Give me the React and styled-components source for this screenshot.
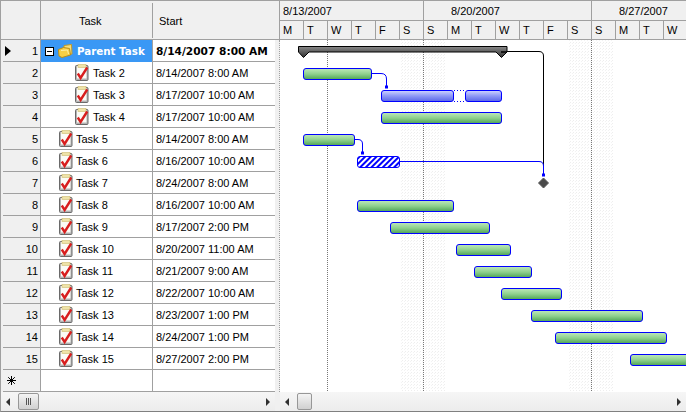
import React from "react";
import styled, { createGlobalStyle } from "styled-components";

const tasks = [
  { id: 1, name: "Parent Task", start: "8/14/2007 8:00 AM", parent: true },
  { id: 2, name: "Task 2", start: "8/14/2007 8:00 AM", child: true },
  { id: 3, name: "Task 3", start: "8/17/2007 10:00 AM", child: true },
  { id: 4, name: "Task 4", start: "8/17/2007 10:00 AM", child: true },
  { id: 5, name: "Task 5", start: "8/14/2007 8:00 AM" },
  { id: 6, name: "Task 6", start: "8/16/2007 10:00 AM" },
  { id: 7, name: "Task 7", start: "8/24/2007 8:00 AM" },
  { id: 8, name: "Task 8", start: "8/16/2007 10:00 AM" },
  { id: 9, name: "Task 9", start: "8/17/2007 2:00 PM" },
  { id: 10, name: "Task 10", start: "8/20/2007 11:00 AM" },
  { id: 11, name: "Task 11", start: "8/21/2007 9:00 AM" },
  { id: 12, name: "Task 12", start: "8/22/2007 10:00 AM" },
  { id: 13, name: "Task 13", start: "8/23/2007 1:00 PM" },
  { id: 14, name: "Task 14", start: "8/24/2007 1:00 PM" },
  { id: 15, name: "Task 15", start: "8/27/2007 2:00 PM" },
];

const weeks = [
  { label: "8/13/2007", width: 144, pad: 3 },
  { label: "8/20/2007", width: 168, pad: 27 },
  { label: "8/27/2007", width: 168, pad: 27 },
];

const days = "MTWTFSSMTWTFSSMTW".split("");

// [left, right, top] in page pixels
const greenBars = [
  [303, 372, 68],
  [381, 502, 112],
  [303, 355, 134],
  [357, 454, 200],
  [390, 490, 222],
  [456, 511, 244],
  [474, 532, 266],
  [501, 562, 288],
  [531, 643, 310],
  [555, 667, 332],
  [630, 700, 354],
];

const GlobalStyle = createGlobalStyle`
  html, body {
    margin: 0;
    padding: 0;
    background: #fff;
  }
`;

const Frame = styled.div`
  width: 686px;
  height: 412px;
  box-sizing: border-box;
  border-top: 1px solid #a0a0a0;
  border-left: 1px solid #a0a0a0;
  border-bottom: 1px solid #808080;
  background: #fff;
  font-family: "Liberation Sans", Arial, sans-serif;
  font-size: 11px;
  color: #000;
  overflow: hidden;
`;

const Panes = styled.div`
  display: flex;
  height: 391px;
`;

const LeftPane = styled.div`
  width: 279px;
  flex: none;
  display: flex;
  flex-direction: column;
  background: #f0f0f0;
`;

const GridHeader = styled.div`
  display: grid;
  grid-template-columns: 40px 112px 1fr;
  height: 39px;
  box-sizing: border-box;
  border-bottom: 1px solid #a0a0a0;
  border-right: 1px solid #a0a0a0;
`;

const HeaderCell = styled.div`
  display: flex;
  align-items: center;
  padding-left: ${(p) => p.$pad}px;
  margin: ${(p) => (p.$first ? "0" : "2px 0 1px")};
  border-right: ${(p) => (p.$line ? "1px solid #a0a0a0" : "none")};
`;

const GridBody = styled.div`
  display: flex;
  flex-direction: column;
  flex: 1;
  border-right: 1px dotted #a0a0a0;
  padding-right: 3px;
`;

const Row = styled.div`
  display: grid;
  grid-template-columns: 40px 112px 122px;
  height: 22px;
`;

const RowHead = styled.div`
  padding-left: 2px;
  border-right: 1px solid #a0a0a0;
`;

const RowHeadInner = styled.div`
  height: 21px;
  border-bottom: 1px solid #a0a0a0;
  display: flex;
  align-items: center;
  justify-content: space-between;
  padding: 0 2px;
`;

const Pointer = styled.span`
  width: 0;
  height: 0;
  border-left: 6px solid #000;
  border-top: 5px solid transparent;
  border-bottom: 5px solid transparent;
`;

const RowNumber = styled.span`
  margin-left: auto;
`;

const TaskCell = styled.div`
  display: flex;
  align-items: center;
  padding-left: ${(p) => (p.$parent ? 4 : p.$child ? 34 : 18)}px;
  box-sizing: border-box;
  background: ${(p) => (p.$selected ? "#3a98f5" : "#fff")};
  color: ${(p) => (p.$selected ? "#fff" : "#000")};
  font-family: ${(p) => (p.$selected ? '"DejaVu Sans", sans-serif' : "inherit")};
  font-weight: ${(p) => (p.$selected ? 700 : 400)};
  font-size: ${(p) => (p.$selected ? "10.3px" : "11px")};
  border-right: 1px solid #a0a0a0;
  border-bottom: ${(p) => (p.$selected ? "0" : "1px solid #a0a0a0")};
  gap: ${(p) => (p.$child || p.$parent ? 4 : 3)}px;
`;

const StartCell = styled.div`
  display: flex;
  align-items: center;
  padding-left: 3px;
  background: #fff;
  border-bottom: 1px solid #a0a0a0;
  font-family: ${(p) => (p.$bold ? '"DejaVu Sans", sans-serif' : "inherit")};
  font-weight: ${(p) => (p.$bold ? 700 : 400)};
  font-size: ${(p) => (p.$bold ? "10.6px" : "11px")};
  white-space: nowrap;
`;

const Expander = styled.span`
  width: 9px;
  height: 9px;
  box-sizing: border-box;
  flex: none;
  border: 1px solid #000;
  background: linear-gradient(#000, #000) center / 5px 1px no-repeat #fff;
`;

const ChartPane = styled.div`
  flex: 1;
  min-width: 0;
  overflow: hidden;
  display: flex;
  flex-direction: column;
`;

const TimeRow = styled.div`
  display: flex;
  height: ${(p) => p.$height}px;
  box-sizing: border-box;
  border-bottom: 1px solid #a0a0a0;
  background: #f0f0f0;
`;

const WeekCell = styled.div`
  flex: none;
  box-sizing: border-box;
  width: ${(p) => p.$width}px;
  padding-left: ${(p) => p.$pad}px;
  border-right: 1px solid #a0a0a0;
  display: flex;
  align-items: center;
`;

const DayCell = styled.div`
  flex: none;
  box-sizing: border-box;
  width: 24px;
  padding-left: 3px;
  border-right: 1px solid #a0a0a0;
  display: flex;
  align-items: center;
`;

const ChartSvg = styled.svg`
  display: block;
  flex: none;
`;

const ScrollRow = styled.div`
  display: flex;
  height: 19px;
  background: #f0f0f0;
`;

const ScrollBar = styled.div`
  box-sizing: border-box;
  width: ${(p) => p.$width}px;
  margin-left: ${(p) => p.$gap}px;
  display: flex;
  align-items: center;
  padding: 0 5px;
  background: linear-gradient(#f6f6f6, #ececec);
`;

const ArrowGlyph = styled.span`
  width: 0;
  height: 0;
  flex: none;
  border-top: 4px solid transparent;
  border-bottom: 4px solid transparent;
  ${(p) =>
    p.$right
      ? "border-left: 4px solid #303030; margin-left: auto;"
      : "border-right: 4px solid #303030;"}
`;

const Thumb = styled.span`
  width: ${(p) => p.$width}px;
  height: 17px;
  margin-left: ${(p) => p.$offset}px;
  box-sizing: border-box;
  flex: none;
  border: 1px solid #979797;
  border-radius: 2px;
  background: linear-gradient(#f4f4f4, #d0d0d0);
  display: flex;
  align-items: center;
  justify-content: center;
  gap: 1px;
`;

const Grip = styled.i`
  width: 1px;
  height: 7px;
  background: #555;
`;

const TaskIcon = () => (
  <svg width="14" height="17" viewBox="0 0 14 17" style={{ flex: "none" }}>
    <rect x="0.5" y="1.5" width="12.5" height="15" rx="1" fill="#b4b4b4" stroke="#6a6a6a" />
    <rect x="2" y="2" width="9.5" height="12.5" fill="#fbfbf6" />
    <rect x="3" y="0.5" width="8" height="3" fill="#efe3a8" stroke="#cdbb70" strokeWidth="0.6" />
    <path d="M2.8 9.5 L5.6 14 L12.2 3.5" fill="none" stroke="#d81e1e" strokeWidth="2.4" />
  </svg>
);

const FolderIcon = () => (
  <svg width="15" height="14" viewBox="0 0 15 14" style={{ flex: "none" }}>
    <path d="M6 1.5 L13.5 0.5 L14 10 L6 11 Z" fill="#f4dd7c" stroke="#c09a25" />
    <path d="M0.5 5.5 L5.5 3.5 L11.5 4.5 L12.5 11 L4 13.5 L1 12 Z" fill="#f8cf45" stroke="#b98d17" />
    <path d="M3 6.5 L9.5 6 L10.5 10" fill="none" stroke="#fdf0a8" />
  </svg>
);

const NewRowIcon = () => (
  <svg width="9" height="9" viewBox="0 0 9 9" style={{ marginLeft: 2 }}>
    <path d="M4.5 0 V9 M0 4.5 H9 M1.2 1.2 L7.8 7.8 M7.8 1.2 L1.2 7.8" stroke="#000" fill="none" />
  </svg>
);

const Bar = ({ left, right, top, fill, stroke = "#0000ff" }) => (
  <rect
    x={left + 0.5}
    y={top + 0.5}
    width={right - left - 1}
    height="11"
    rx="2.5"
    fill={fill}
    stroke={stroke}
  />
);

const Dot = ({ x, y, fill = "#0000ff" }) => <rect x={x - 1.5} y={y - 1.5} width="3" height="3" fill={fill} />;

const Chart = () => (
  <ChartSvg width="406" height="351" viewBox="280 40 406 351">
    <defs>
      <linearGradient id="green" x1="0" y1="0" x2="0" y2="1">
        <stop offset="0" stopColor="#bfe8bb" />
        <stop offset="0.5" stopColor="#8fd08e" />
        <stop offset="1" stopColor="#4fa356" />
      </linearGradient>
      <linearGradient id="blue" x1="0" y1="0" x2="0" y2="1">
        <stop offset="0" stopColor="#d0d5ff" />
        <stop offset="0.5" stopColor="#8d98f6" />
        <stop offset="1" stopColor="#5a66e6" />
      </linearGradient>
      <linearGradient id="dark" x1="0" y1="0" x2="0" y2="1">
        <stop offset="0" stopColor="#8a8a8a" />
        <stop offset="1" stopColor="#303030" />
      </linearGradient>
      <pattern id="weekend" width="3" height="3" patternUnits="userSpaceOnUse">
        <rect x="0" y="0" width="1" height="1" fill="#eeeeee" />
        <rect x="2" y="1" width="1" height="1" fill="#f3f3f3" />
      </pattern>
      <pattern id="hatch" width="4" height="4" patternUnits="userSpaceOnUse" patternTransform="rotate(45)">
        <rect width="4" height="4" fill="#ffffff" />
        <rect width="2" height="4" fill="#0000ff" />
      </pattern>
    </defs>

    <rect x="400" y="40" width="46" height="351" fill="url(#weekend)" />
    <rect x="568" y="40" width="46" height="351" fill="url(#weekend)" />
    {[327, 423, 591].map((x) => (
      <line key={x} x1={x + 0.5} y1="40" x2={x + 0.5} y2="391" stroke="#777" strokeDasharray="1 1" />
    ))}

    <path
      d="M298.5 46.5 H507 V52 H501 L501 52 L507 52 L501.5 57.5 L496 52 H309 L303.5 57.5 L298.5 52 Z"
      fill="url(#dark)"
      stroke="#000"
    />

    <path d="M507 51.5 H539 Q543.5 51.5 543.5 56 V175" fill="none" stroke="#000" />
    <path d="M400 161.5 H539 Q543.5 161.5 543.5 166 V175" fill="none" stroke="#0000ff" />
    <Dot x={543.5} y={175} />
    <path d="M538.5 183 L543.5 178 L548.5 183 L543.5 188 Z" fill="#4a4a4a" stroke="#555" />

    <path d="M372 73.5 H381 Q386.5 73.5 386.5 79 V87" fill="none" stroke="#0000ff" />
    <Dot x={386.5} y={87} />
    <path d="M355 139.5 H358 Q362.5 139.5 362.5 144 V153" fill="none" stroke="#0000ff" />
    <Dot x={362.5} y={153} />

    {greenBars.map(([left, right, top]) => (
      <Bar key={top} left={left} right={right} top={top} fill="url(#green)" />
    ))}
    <Bar left={381} right={454} top={90} fill="url(#blue)" />
    <Bar left={465} right={502} top={90} fill="url(#blue)" />
    <path d="M454 90.5 H465 M454 101.5 H465" stroke="#0000ff" strokeDasharray="1 2" />
    <Bar left={357} right={400} top={156} fill="url(#hatch)" />
  </ChartSvg>
);

export default function App() {
  return (
    <Frame>
      <GlobalStyle />
      <Panes>
        <LeftPane>
          <GridHeader>
            <HeaderCell $first $line />
            <HeaderCell $pad={38} $line>Task</HeaderCell>
            <HeaderCell $pad={6}>Start</HeaderCell>
          </GridHeader>
          <GridBody>
            {tasks.map((t) => (
              <Row key={t.id}>
                <RowHead>
                  <RowHeadInner>
                    {t.id === 1 && <Pointer />}
                    <RowNumber>{t.id}</RowNumber>
                  </RowHeadInner>
                </RowHead>
                <TaskCell $parent={t.parent} $child={t.child} $selected={t.parent}>
                  {t.parent && <Expander />}
                  {t.parent ? <FolderIcon /> : <TaskIcon />}
                  <span>{t.name}</span>
                </TaskCell>
                <StartCell $bold={t.parent}>{t.start}</StartCell>
              </Row>
            ))}
            <Row>
              <RowHead>
                <RowHeadInner>
                  <NewRowIcon />
                </RowHeadInner>
              </RowHead>
              <TaskCell />
              <StartCell />
            </Row>
          </GridBody>
        </LeftPane>
        <ChartPane>
          <TimeRow $height={20}>
            {weeks.map((w) => (
              <WeekCell key={w.label} $width={w.width} $pad={w.pad}>{w.label}</WeekCell>
            ))}
          </TimeRow>
          <TimeRow $height={19}>
            {days.map((d, i) => (
              <DayCell key={i}>{d}</DayCell>
            ))}
          </TimeRow>
          <Chart />
        </ChartPane>
      </Panes>
      <ScrollRow>
        <ScrollBar $width={274} $gap={0}>
          <ArrowGlyph />
          <Thumb $width={21} $offset={8}>
            <Grip />
            <Grip />
            <Grip />
          </Thumb>
          <ArrowGlyph $right />
        </ScrollBar>
        <ScrollBar $width={406} $gap={5}>
          <ArrowGlyph />
          <Thumb $width={15} $offset={8} />
          <ArrowGlyph $right />
        </ScrollBar>
      </ScrollRow>
    </Frame>
  );
}
